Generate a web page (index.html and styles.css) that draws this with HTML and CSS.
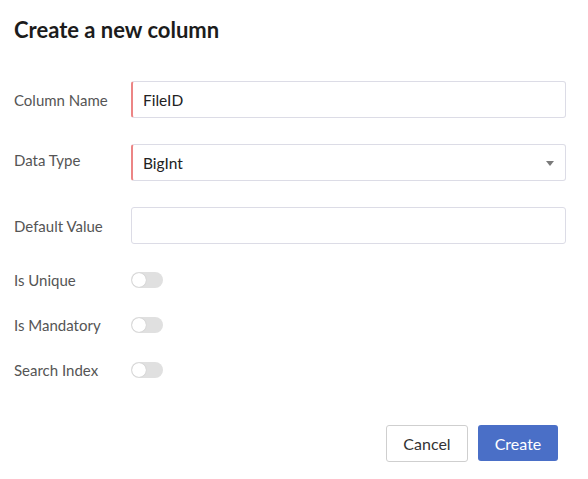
FILE: index.html
```html
<!DOCTYPE html>
<html>
<head>
<meta charset="utf-8">
<link rel="stylesheet" href="styles.css">
</head>
<body>
<div class="dialog">
  <h1 class="title">Create a new column</h1>
  <div class="form">
    <div class="row">
      <label class="label">Column Name</label>
      <div class="field required"><span class="value">FileID</span></div>
    </div>
    <div class="row">
      <label class="label raised">Data Type</label>
      <div class="field required select"><span class="value">BigInt</span><span class="caret"></span></div>
    </div>
    <div class="row">
      <label class="label">Default Value</label>
      <div class="field"></div>
    </div>
    <div class="row toggle-row first">
      <label class="label">Is Unique</label>
      <span class="toggle"><span class="knob"></span></span>
    </div>
    <div class="row toggle-row">
      <label class="label">Is Mandatory</label>
      <span class="toggle"><span class="knob"></span></span>
    </div>
    <div class="row toggle-row">
      <label class="label">Search Index</label>
      <span class="toggle"><span class="knob"></span></span>
    </div>
  </div>
  <div class="actions">
    <button class="btn btn-cancel">Cancel</button>
    <button class="btn btn-primary">Create</button>
  </div>
</div>
</body>
</html>
```

FILE: styles.css
```css
html, body {
  margin: 0;
  padding: 0;
  background: #ffffff;
}
body {
  font-family: Lato, "Open Sans", sans-serif;
}
.dialog {
  padding: 17px 22px 0 14px;
}
.title {
  margin: 0;
  font-size: 22px;
  line-height: 26px;
  font-weight: 700;
  color: #1c1c1c;
}
.form {
  margin-top: 38px;
  display: flex;
  flex-direction: column;
  gap: 26px;
}
.row {
  display: flex;
  align-items: center;
}
.label {
  width: 117px;
  flex: none;
  font-size: 15px;
  color: #555555;
}
.label.raised {
  padding-bottom: 5px;
}
.field {
  flex: 1;
  height: 37px;
  box-sizing: border-box;
  border: 1px solid #dcdce6;
  border-radius: 3px;
  display: flex;
  align-items: center;
  padding-left: 11px;
  position: relative;
}
.field.required {
  border-left: 2px solid #ec8585;
  padding-left: 10px;
}
.value {
  font-size: 15.5px;
  color: #222222;
}
.caret {
  position: absolute;
  right: 11px;
  top: 16px;
  width: 0;
  height: 0;
  border-left: 4px solid transparent;
  border-right: 4px solid transparent;
  border-top: 5px solid #7a7a7a;
}
.toggle-row {
  height: 24px;
  margin-top: -5px;
}
.toggle-row.first {
  margin-top: -2px;
}
.toggle {
  width: 32px;
  height: 16px;
  border-radius: 8px;
  background: #e0e0e0;
  position: relative;
  display: block;
}
.knob {
  position: absolute;
  left: 1px;
  top: 1px;
  width: 14px;
  height: 14px;
  border-radius: 50%;
  background: #ffffff;
  box-shadow: 0 0 1px rgba(0,0,0,0.25);
}
.actions {
  margin-top: 43px;
  display: flex;
  justify-content: flex-end;
  gap: 10px;
  padding-right: 8px;
}
.btn {
  font-family: Lato, "Open Sans", sans-serif;
  font-size: 16px;
  height: 37px;
  border-radius: 3px;
  cursor: pointer;
}
.btn-cancel {
  width: 82px;
  background: #ffffff;
  border: 1px solid #cfcfcf;
  color: #333333;
}
.btn-primary {
  width: 80px;
  height: 36px;
  background: #4a6fc7;
  border: none;
  color: #ffffff;
}
```
